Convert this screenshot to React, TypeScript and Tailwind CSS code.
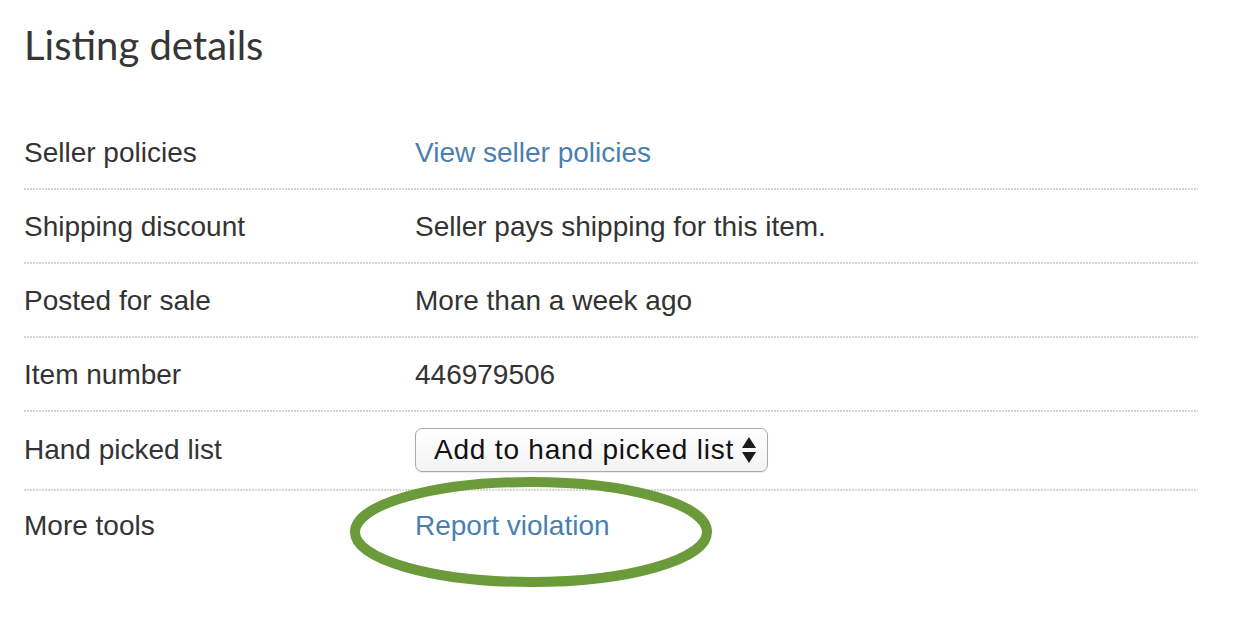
import React from "react";

const Divider = () => (
  <div className="h-[2px] w-full bg-[repeating-linear-gradient(to_right,#d6d6d6_0px,#d6d6d6_2px,transparent_2px,transparent_3px)]" />
);

const Row = ({ label, children, pt = "pt-[21px]", pb = "pb-[19px]" }: { label: string; children: React.ReactNode; pt?: string; pb?: string }) => (
  <div className={`flex items-center ${pt} ${pb}`}>
    <div className="w-[391px] shrink-0 text-[28px] leading-[32px] text-[#333]">{label}</div>
    <div className="text-[28px] leading-[32px] text-[#333]">{children}</div>
  </div>
);

export default function App() {
  return (
    <div className="relative w-[1254px] h-[628px] bg-white font-['Liberation_Sans',Arial,sans-serif]">
      <div className="pl-[24px] w-[1198px]">
        <h1 className="pt-[20px] mb-[46px] font-['Lato',sans-serif] text-[40px] leading-[50px] text-[#363636] font-normal">
          Listing details
        </h1>
        <Row label="Seller policies">
          <span className="text-[#4a7fb0]">View seller policies</span>
        </Row>
        <Divider />
        <Row label="Shipping discount">Seller pays shipping for this item.</Row>
        <Divider />
        <Row label="Posted for sale">More than a week ago</Row>
        <Divider />
        <Row label="Item number">446979506</Row>
        <Divider />
        <Row label="Hand picked list" pt="pt-[16px]" pb="pb-[17px]">
          <div className="flex items-center h-[44px] w-[353px] rounded-[7px] border border-[#a8a8a8] bg-[linear-gradient(#ffffff,#f3f3f3)] pl-[18px] pr-[10px] shadow-[0_1px_1px_rgba(0,0,0,0.08)]">
            <span className="text-[28px] leading-[32px] text-[#111] tracking-[0.8px]">Add to hand picked list</span>
            <svg className="ml-auto" width="16" height="26" viewBox="0 0 16 26">
              <path d="M8 0 L15 11 L1 11 Z" fill="#1a1a1a" />
              <path d="M8 26 L15 15 L1 15 Z" fill="#1a1a1a" />
            </svg>
          </div>
        </Row>
        <Divider />
        <Row label="More tools" pt="pt-[19px]">
          <span className="text-[#4a7fb0]">Report violation</span>
        </Row>
      </div>
      <svg className="absolute left-[345px] top-[472px]" width="375" height="122" viewBox="0 0 375 122">
        <ellipse cx="186" cy="60" rx="176" ry="50" fill="none" stroke="#6a9a3a" strokeWidth="10" />
      </svg>
    </div>
  );
}
